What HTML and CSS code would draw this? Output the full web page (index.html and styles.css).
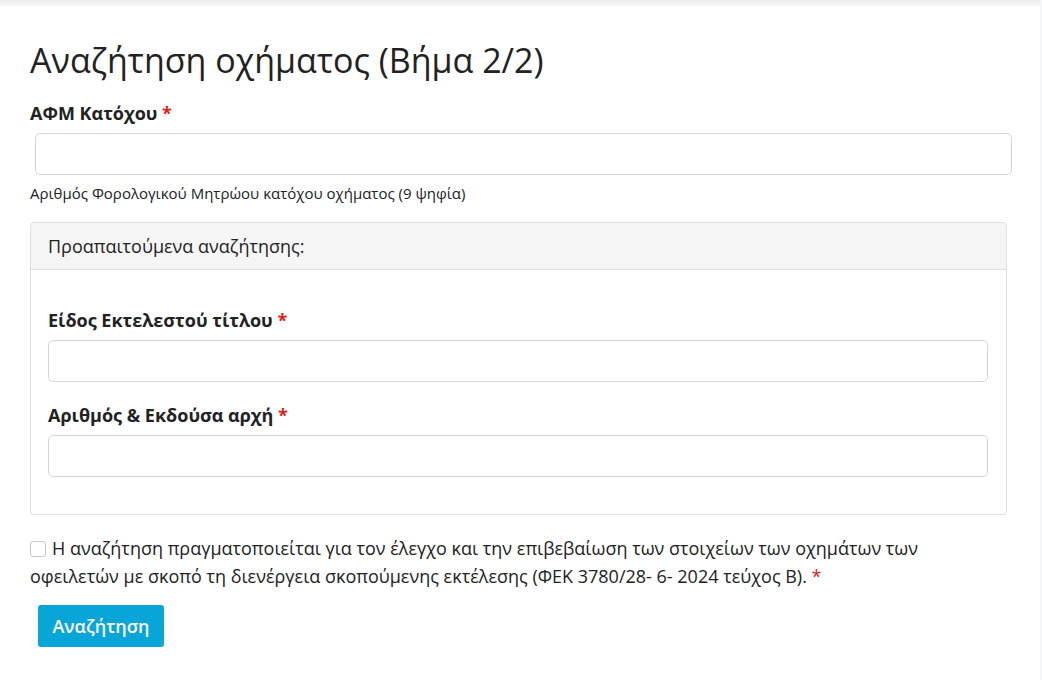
FILE: index.html
```html
<!DOCTYPE html>
<html lang="el">
<head>
<meta charset="utf-8">
<link rel="stylesheet" href="styles.css">
</head>
<body>
<div class="topbar"></div>
<main class="page">
  <h1 class="title">Αναζήτηση οχήματος (Βήμα 2/2)</h1>
  <div class="field">
    <label class="label">ΑΦΜ Κατόχου <span class="req">*</span></label>
    <input class="input input-afm" type="text">
    <div class="help">Αριθμός Φορολογικού Μητρώου κατόχου οχήματος (9 ψηφία)</div>
  </div>
  <section class="panel">
    <div class="panel-head">Προαπαιτούμενα αναζήτησης:</div>
    <div class="panel-body">
      <div class="pfield">
        <label class="label">Είδος Εκτελεστού τίτλου <span class="req">*</span></label>
        <input class="input" type="text">
      </div>
      <div class="pfield">
        <label class="label">Αριθμός &amp; Εκδούσα αρχή <span class="req">*</span></label>
        <input class="input" type="text">
      </div>
    </div>
  </section>
  <p class="consent"><span class="box"></span>Η αναζήτηση πραγματοποιείται για τον έλεγχο και την επιβεβαίωση των στοιχείων των οχημάτων των οφειλετών με σκοπό τη διενέργεια σκοπούμενης εκτέλεσης (ΦΕΚ 3780/28- 6- 2024 τεύχος Β). <span class="req">*</span></p>
  <button class="btn" type="button">Αναζήτηση</button>
</main>
</body>
</html>
```
FILE: styles.css
```css
* { box-sizing: border-box; }
html, body { margin: 0; padding: 0; background: #fff; }
body {
  font-family: "Open Sans", "Noto Sans", sans-serif;
  color: #222;
  font-size: 18px;
  height: 680px;
  overflow: hidden;
  border-right: 2px solid #f4f5f7;
}
.topbar {
  height: 6px;
  background: linear-gradient(#ececee, #f7f7f8);
}
.page {
  padding: 0 28px 0 30px;
}
.title {
  margin: 32px 0 0;
  font-size: 34px;
  font-weight: 400;
  line-height: 44px;
  color: #222;
}
.label {
  display: block;
  font-weight: 700;
  font-size: 18px;
  line-height: 24px;
  color: #222;
}
.req { color: #e21b1b; }
.field { margin-top: 19px; }
.input {
  display: block;
  width: 100%;
  height: 42px;
  border: 1px solid #d2d6dd;
  border-radius: 5px;
  background: #fff;
  font: inherit;
  outline: none;
}
.input-afm {
  margin: 8px 0 0 5px;
  width: 977px;
}
.help {
  margin-top: 8px;
  font-size: 15px;
  line-height: 20px;
  color: #222;
}
.panel {
  margin-top: 19px;
  border: 1px solid #dcdfe3;
  border-radius: 4px;
  width: 977px;
}
.panel-head {
  height: 47px;
  padding: 0 17px;
  background: #f5f5f5;
  border-bottom: 1px solid #dcdfe3;
  border-radius: 4px 4px 0 0;
  font-size: 18px;
  line-height: 46px;
  color: #222;
}
.panel-body {
  padding: 38px 18px 37px 17px;
}
.pfield + .pfield { margin-top: 21px; }
.pfield .input { margin-top: 8px; }
.consent {
  margin: 19px 0 0;
  font-size: 18px;
  line-height: 28px;
  color: #222;
  padding-right: 80px;
}
.box {
  display: inline-block;
  width: 16px;
  height: 16px;
  margin-right: 6px;
  vertical-align: -2px;
  border: 1px solid #c5c7cc;
  border-radius: 3px;
  background: #fff;
}
.btn {
  display: block;
  margin: 15px 0 0 8px;
  width: 126px;
  height: 42px;
  border: 0;
  border-radius: 3px;
  background: #08a5d9;
  color: #fff;
  font-family: "Open Sans", "Noto Sans", sans-serif;
  font-weight: 600;
  font-size: 18px;
}
```
